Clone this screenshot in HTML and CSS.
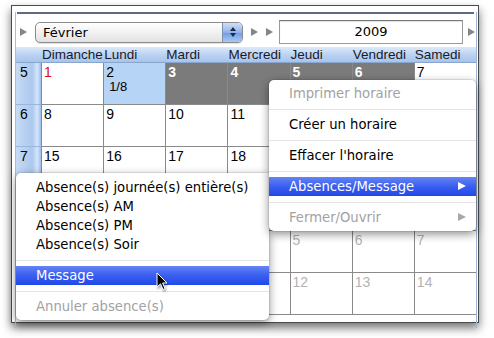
FILE: index.html
```html
<!DOCTYPE html>
<html lang="fr">
<head>
  <meta charset="UTF-8" />
  <title>Calendrier - Février 2009</title>
  <link rel="stylesheet" href="styles.css">
</head>
<body>
  <div class="window">
    <div class="pane">
      <div class="topline"></div>

      <div class="toolbar">
        <span class="tri"></span>
        <div class="popup">
          <span class="popup-label">Février</span>
          <span class="stepper">
            <svg width="8" height="12" viewBox="0 0 8 12">
              <path d="M4 1 L7 5 L1 5 Z M4 11 L7 7 L1 7 Z" fill="#1c2a44"/>
            </svg>
          </span>
        </div>
        <span class="tri tri-prev"></span>
        <span class="tri tri-next"></span>
        <div class="field">2009</div>
        <span class="tri tri-end"></span>
      </div>

      <!-- cells covered by the open menus are left empty -->
      <div class="cal">
        <div class="head"></div>
        <div class="head">Dimanche</div>
        <div class="head">Lundi</div>
        <div class="head">Mardi</div>
        <div class="head">Mercredi</div>
        <div class="head">Jeudi</div>
        <div class="head">Vendredi</div>
        <div class="head">Samedi</div>

        <div class="week">5</div>
        <div class="day"><span class="red">1</span></div>
        <div class="day sel">2<div class="note">1/8</div></div>
        <div class="day dark">3</div>
        <div class="day dark">4</div>
        <div class="day dark">5</div>
        <div class="day dark">6</div>
        <div class="day">7</div>

        <div class="week">6</div>
        <div class="day">8</div>
        <div class="day">9</div>
        <div class="day">10</div>
        <div class="day">11</div>
        <div class="day"></div>
        <div class="day"></div>
        <div class="day"></div>

        <div class="week">7</div>
        <div class="day">15</div>
        <div class="day">16</div>
        <div class="day">17</div>
        <div class="day">18</div>
        <div class="day"></div>
        <div class="day"></div>
        <div class="day"></div>

        <div class="week"></div>
        <div class="day"></div>
        <div class="day"></div>
        <div class="day"></div>
        <div class="day"></div>
        <div class="day"></div>
        <div class="day"></div>
        <div class="day"></div>

        <div class="week"></div>
        <div class="day off"></div>
        <div class="day off"></div>
        <div class="day off"></div>
        <div class="day off"></div>
        <div class="day off">5</div>
        <div class="day off">6</div>
        <div class="day off">7</div>

        <div class="week"></div>
        <div class="day off"></div>
        <div class="day off"></div>
        <div class="day off"></div>
        <div class="day off"></div>
        <div class="day off">12</div>
        <div class="day off">13</div>
        <div class="day off">14</div>
      </div>
    </div>
  </div>

  <div class="menu context">
    <div class="item disabled">Imprimer horaire</div>
    <div class="sep"></div>
    <div class="item">Créer un horaire</div>
    <div class="sep"></div>
    <div class="item">Effacer l'horaire</div>
    <div class="sep"></div>
    <div class="item active">Absences/Message<span class="arrow"></span></div>
    <div class="sep"></div>
    <div class="item disabled">Fermer/Ouvrir<span class="arrow"></span></div>
  </div>

  <div class="menu submenu">
    <div class="item">Absence(s) journée(s) entière(s)</div>
    <div class="item">Absence(s) AM</div>
    <div class="item">Absence(s) PM</div>
    <div class="item">Absence(s) Soir</div>
    <div class="sep"></div>
    <div class="item active">Message</div>
    <div class="sep"></div>
    <div class="item disabled">Annuler absence(s)</div>
  </div>

  <svg class="cursor" width="13" height="20" viewBox="0 0 13 20">
    <path d="M1 1 L1 15 L4.5 11.8 L7 17.5 L9 16.6 L6.6 11 L11 11 Z" fill="#000" stroke="#fff" stroke-width="1" stroke-linejoin="round"/>
  </svg>
</body>
</html>
```

FILE: styles.css
```css
* {
  box-sizing: border-box;
}
body {
  margin: 0;
  background: #fff;
  font-family: "Liberation Sans", Arial, sans-serif;
  color: #000;
  width: 494px;
  height: 338px;
  overflow: hidden;
}
.window {
  margin: 5px 0 0 11px;
  width: 468px;
  height: 318px;
  border: 1px solid #4a4a4a;
  background: #fff;
  box-shadow: 0 5px 9px rgba(0,0,0,0.55);
  padding: 0 1px 0 3px;
}
.pane {
  height: 100%;
  border-left: 1px solid #b9b9b9;
  border-right: 1px solid #9fb6d6;
}
.topline {
  height: 2px;
  margin: 6px 2px 0 1px;
  background: #5c6b80;
}
.toolbar {
  display: flex;
  align-items: center;
  height: 24px;
  margin-top: 6px;
  padding-left: 4px;
}
.tri {
  width: 0;
  height: 0;
  border-left: 7px solid #858585;
  border-top: 4.5px solid transparent;
  border-bottom: 4.5px solid transparent;
  flex: none;
}
.popup {
  display: flex;
  align-items: stretch;
  margin-left: 8px;
  width: 208px;
  height: 21px;
  border: 1px solid #8c8c8c;
  border-radius: 5px;
  background: linear-gradient(#ffffff, #f1f1f1 50%, #e2e2e2);
  box-shadow: 0 1px 1px rgba(0,0,0,0.12);
  font-family: "DejaVu Sans", sans-serif;
  font-size: 13px;
  overflow: hidden;
}
.popup-label {
  flex: 1;
  padding-left: 7px;
  line-height: 19px;
}
.stepper {
  width: 20px;
  display: flex;
  align-items: center;
  justify-content: center;
  border-left: 1px solid #7b8fae;
  background: linear-gradient(#cfe0f8, #8fb2ea 50%, #6f9be3 51%, #a9c9f3);
}
.tri-prev {
  margin-left: 8px;
}
.tri-next {
  margin-left: 8px;
}
.field {
  margin-left: 6px;
  width: 184px;
  height: 24px;
  border: 1px solid #9a9a9a;
  border-top-color: #777;
  box-shadow: inset 0 1px 1px rgba(0,0,0,0.12);
  text-align: center;
  font-family: "DejaVu Sans", sans-serif;
  font-size: 13px;
  line-height: 22px;
}
.tri-end {
  margin-left: 5px;
}

.cal {
  margin-top: 3px;
  display: grid;
  grid-template-columns: 25px repeat(7, 1fr);
  grid-template-rows: 16px repeat(6, 42px);
  font-size: 14px;
}
.head {
  background: linear-gradient(#dce9f9, #bcd4f2 50%, #a6c4ec);
  border-bottom: 1px solid #8ba6cc;
  font-size: 13.5px;
  line-height: 15px;
  padding-left: 1px;
  white-space: nowrap;
  color: #1a1a2a;
}
.week {
  background: linear-gradient(to right, #c6dbf5, #abc8ee 65%, #d6e6f9 85%, #9cbcea);
  border-bottom: 1px solid #9bb6dc;
  padding: 1px 0 0 4px;
  line-height: 16px;
}
.day {
  border-left: 1px solid #8a8a8a;
  border-bottom: 1px solid #8a8a8a;
  padding: 1px 0 0 2px;
  line-height: 16px;
}
.red {
  color: #d81010;
}
.sel {
  background: #b5d4f6;
}
.note {
  padding-left: 3px;
  font-size: 13px;
  line-height: 14px;
}
.dark {
  background: #7b7b7b;
  color: #fff;
  font-weight: bold;
}
.off {
  color: #b3b3b3;
}

.menu {
  position: absolute;
  background: #fff;
  border-radius: 5px;
  box-shadow: 0 3px 10px rgba(0,0,0,0.45), 0 0 0 1px rgba(0,0,0,0.08);
  font-family: "DejaVu Sans", sans-serif;
  font-size: 13.2px;
  padding: 4px 0;
}
.context {
  left: 269px;
  top: 80px;
  width: 207px;
  z-index: 1;
}
.submenu {
  left: 16px;
  top: 173px;
  width: 253px;
  padding-top: 5px;
  border-top-right-radius: 0;
}
.item {
  position: relative;
  height: 19px;
  line-height: 19px;
  padding-left: 20px;
  white-space: nowrap;
}
.item.disabled {
  color: #a2a2a2;
}
.item.active {
  color: #fff;
  background: linear-gradient(#6584f6, #3a5ef0 50%, #2149ea);
}
.sep {
  height: 12px;
  display: flex;
  align-items: center;
}
.sep::after {
  content: "";
  flex: 1;
  height: 1px;
  background: #e4e4e4;
}
.arrow {
  position: absolute;
  right: 10px;
  top: 5px;
  width: 0;
  height: 0;
  border-left: 8px solid #fff;
  border-top: 4.5px solid transparent;
  border-bottom: 4.5px solid transparent;
}
.disabled .arrow {
  border-left-color: #a8a8a8;
}
.cursor {
  position: absolute;
  left: 156px;
  top: 272px;
  z-index: 2;
  filter: drop-shadow(1px 2px 1px rgba(0,0,0,0.35));
}
```
